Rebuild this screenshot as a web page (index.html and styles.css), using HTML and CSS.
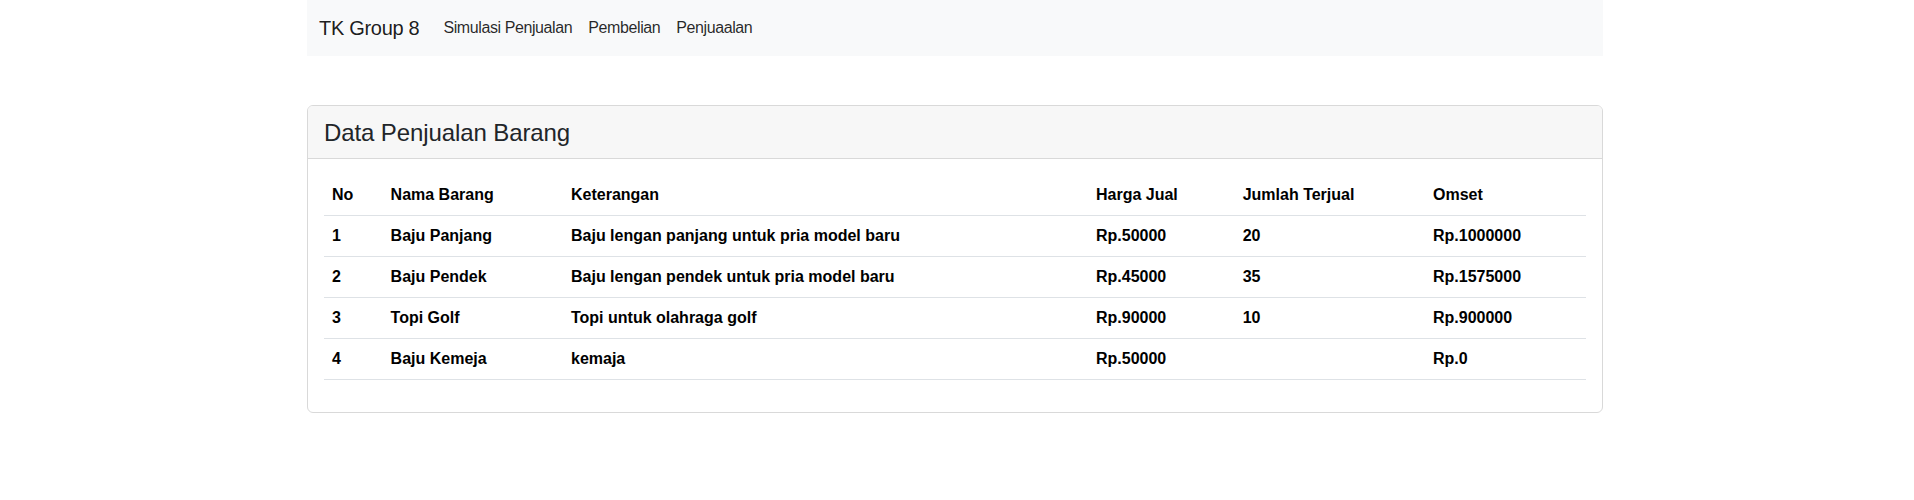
FILE: index.html
```html
<!DOCTYPE html>
<html lang="id">
<head>
<meta charset="utf-8">
<title>TK Group 8</title>
<link rel="stylesheet" href="styles.css">
</head>
<body>
<div class="container">
  <nav class="navbar">
    <a class="brand" href="#">TK Group 8</a>
    <ul class="nav">
      <li><a class="nav-link" href="#">Simulasi Penjualan</a></li>
      <li><a class="nav-link" href="#">Pembelian</a></li>
      <li><a class="nav-link" href="#">Penjuaalan</a></li>
    </ul>
  </nav>

  <div class="card">
    <div class="card-header">
      <h3 class="card-title">Data Penjualan Barang</h3>
    </div>
    <div class="card-body">
      <table class="table">
        <thead>
          <tr>
            <th class="c-no">No</th>
            <th class="c-nama">Nama Barang</th>
            <th class="c-ket">Keterangan</th>
            <th class="c-harga">Harga Jual</th>
            <th class="c-jml">Jumlah Terjual</th>
            <th class="c-omset">Omset</th>
          </tr>
        </thead>
        <tbody>
          <tr>
            <td>1</td><td>Baju Panjang</td><td>Baju lengan panjang untuk pria model baru</td><td>Rp.50000</td><td>20</td><td>Rp.1000000</td>
          </tr>
          <tr>
            <td>2</td><td>Baju Pendek</td><td>Baju lengan pendek untuk pria model baru</td><td>Rp.45000</td><td>35</td><td>Rp.1575000</td>
          </tr>
          <tr>
            <td>3</td><td>Topi Golf</td><td>Topi untuk olahraga golf</td><td>Rp.90000</td><td>10</td><td>Rp.900000</td>
          </tr>
          <tr>
            <td>4</td><td>Baju Kemeja</td><td>kemaja</td><td>Rp.50000</td><td></td><td>Rp.0</td>
          </tr>
        </tbody>
      </table>
    </div>
  </div>
</div>
</body>
</html>
```
FILE: styles.css
```css
* { box-sizing: border-box; }

body {
  margin: 0;
  padding-right: 4px;
  font-family: "Liberation Sans", Arial, sans-serif;
  font-size: 16px;
  line-height: 1.5;
  color: #212529;
  background: #fff;
}

.container {
  width: 1296px;
  margin: 0 auto;
}

/* Navbar */
.navbar {
  display: flex;
  align-items: center;
  height: 56px;
  padding: 8px 12px;
  background: #f8f9fa;
}

.brand {
  font-size: 20px;
  line-height: 30px;
  padding: 5px 0;
  margin-right: 16px;
  color: rgba(0, 0, 0, 0.9);
  text-decoration: none;
  letter-spacing: -0.3px;
}

.nav {
  display: flex;
  list-style: none;
  margin: 0;
  padding: 0;
}

.nav-link {
  display: block;
  padding: 8px;
  color: rgba(0, 0, 0, 0.85);
  text-decoration: none;
  letter-spacing: -0.4px;
}

/* Card */
.card {
  margin-top: 49px;
  border: 1px solid #d9d9d9;
  border-radius: 6px;
  overflow: hidden;
}

.card-header {
  padding: 9px 16px 7px;
  background: #f7f7f7;
  border-bottom: 1px solid #d9d9d9;
}

.card-title {
  margin: 0;
  font-size: 24px;
  line-height: 36px;
  font-weight: 400;
  letter-spacing: -0.1px;
  color: #212529;
}

.card-body {
  padding: 16px;
}

/* Table */
.table {
  width: 100%;
  margin-bottom: 16px;
  border-collapse: collapse;
  table-layout: fixed;
  color: #000;
}

.table th,
.table td {
  padding: 8px;
  line-height: 24px;
  text-align: left;
  font-weight: 700;
  border-bottom: 1px solid #dee2e6;
  vertical-align: top;
  white-space: nowrap;
}

.c-no { width: 58.6px; }
.c-nama { width: 180.4px; }
.c-ket { width: 525px; }
.c-harga { width: 146.7px; }
.c-jml { width: 190.3px; }
.c-omset { width: auto; }
```
